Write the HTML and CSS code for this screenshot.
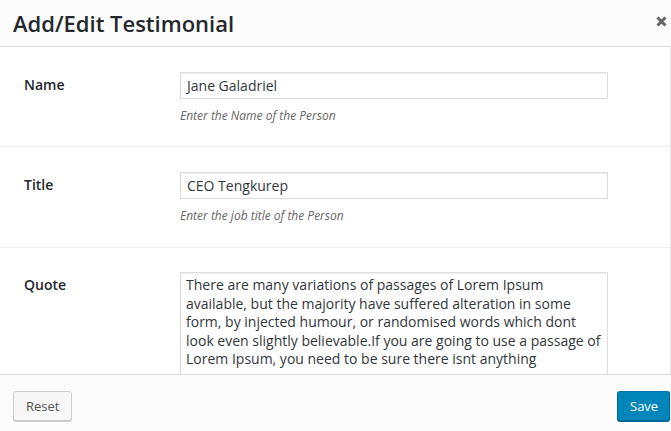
FILE: index.html
```html
<!DOCTYPE html>
<html>
<head>
<meta charset="utf-8">
<link rel="stylesheet" href="styles.css">
</head>
<body>
<div class="modal">
  <div class="modal-header">
    <h1 class="modal-title">Add/Edit Testimonial</h1>
    <span class="close" aria-label="Close">
      <svg width="11" height="11" viewBox="0 0 11 11"><path d="M1.5 1.5 L9.5 9.5 M9.5 1.5 L1.5 9.5" stroke="#666" stroke-width="3" stroke-linecap="butt"/></svg>
    </span>
  </div>
  <div class="modal-body">
    <div class="row">
      <label class="label">Name</label>
      <div class="field">
        <div class="input">Jane Galadriel</div>
        <p class="help">Enter the Name of the Person</p>
      </div>
    </div>
    <div class="row">
      <label class="label">Title</label>
      <div class="field">
        <div class="input">CEO Tengkurep</div>
        <p class="help">Enter the job title of the Person</p>
      </div>
    </div>
    <div class="row row-last">
      <label class="label">Quote</label>
      <div class="field">
        <div class="textarea">There are many variations of passages of Lorem Ipsum available, but the majority have suffered alteration in some form, by injected humour, or randomised words which dont look even slightly believable.If you are going to use a passage of Lorem Ipsum, you need to be sure there isnt anything</div>
      </div>
    </div>
  </div>
  <div class="modal-footer">
    <button class="btn btn-reset">Reset</button>
    <button class="btn btn-save">Save</button>
  </div>
</div>
</body>
</html>
```
FILE: styles.css
```css
html, body {
  margin: 0;
  padding: 0;
  background: #fff;
}
body {
  font-family: "Open Sans", "Liberation Sans", sans-serif;
  color: #444;
}
.modal {
  width: 671px;
  height: 431px;
  display: flex;
  flex-direction: column;
  overflow: hidden;
}
.modal-header {
  height: 46px;
  flex: none;
  background: #fcfcfc;
  border-bottom: 1px solid #dddddd;
  display: flex;
  align-items: center;
  justify-content: space-between;
  padding: 0 4px 0 13px;
}
.modal-title {
  margin: 0;
  font-size: 22px;
  font-weight: 600;
  line-height: 46px;
  color: #23282d;
}
.close {
  display: flex;
  width: 11px;
  height: 11px;
  margin-bottom: 4px;
}
.modal-body {
  flex: 1;
  overflow: hidden;
  border-right: 1px solid #e5e5e5;
}
.row {
  display: flex;
  padding: 25px 0 0 24px;
  height: 74px;
  border-bottom: 1px solid #eeeeee;
}
.row + .row {
  height: 75px;
}
.row-last {
  border-bottom: none;
  padding-top: 24px;
}
.label {
  width: 156px;
  flex: none;
  font-size: 14px;
  font-weight: 600;
  color: #23282d;
  line-height: 18px;
  padding-top: 4px;
}
.field {
  width: 428px;
}
.input {
  height: 27px;
  box-sizing: border-box;
  border: 1px solid #dddddd;
  box-shadow: inset 0 1px 2px rgba(0,0,0,0.07);
  padding: 0 6px;
  font-size: 14px;
  line-height: 25px;
  color: #32373c;
}
.help {
  margin: 9px 0 0 0;
  font-size: 12px;
  font-style: italic;
  color: #666;
  line-height: 16px;
}
.textarea {
  height: 140px;
  box-sizing: border-box;
  border: 1px solid #dddddd;
  box-shadow: inset 0 1px 2px rgba(0,0,0,0.07);
  padding: 3px 2px 2px 5px;
  font-size: 14px;
  line-height: 18.6px;
  color: #32373c;
}
.modal-footer {
  height: 57px;
  flex: none;
  box-sizing: border-box;
  background: #fcfcfc;
  border-top: 1px solid #dddddd;
  display: flex;
  align-items: flex-start;
  justify-content: space-between;
  padding: 16px 1px 0 13px;
}
.btn {
  font-family: "Open Sans", "Liberation Sans", sans-serif;
  font-size: 13px;
  height: 30px;
  line-height: 28px;
  padding: 0 12px;
  border-radius: 3px;
  box-sizing: border-box;
  cursor: pointer;
}
.btn-reset {
  background: #f7f7f7;
  border: 1px solid #cccccc;
  box-shadow: 0 1px 0 #cccccc;
  color: #555;
  width: 59px;
}
.btn-save {
  background: #0085ba;
  border: 1px solid #0073aa;
  border-color: #0073aa #006799 #006799;
  box-shadow: 0 1px 0 #006799;
  color: #fff;
  width: 53px;
}
```
